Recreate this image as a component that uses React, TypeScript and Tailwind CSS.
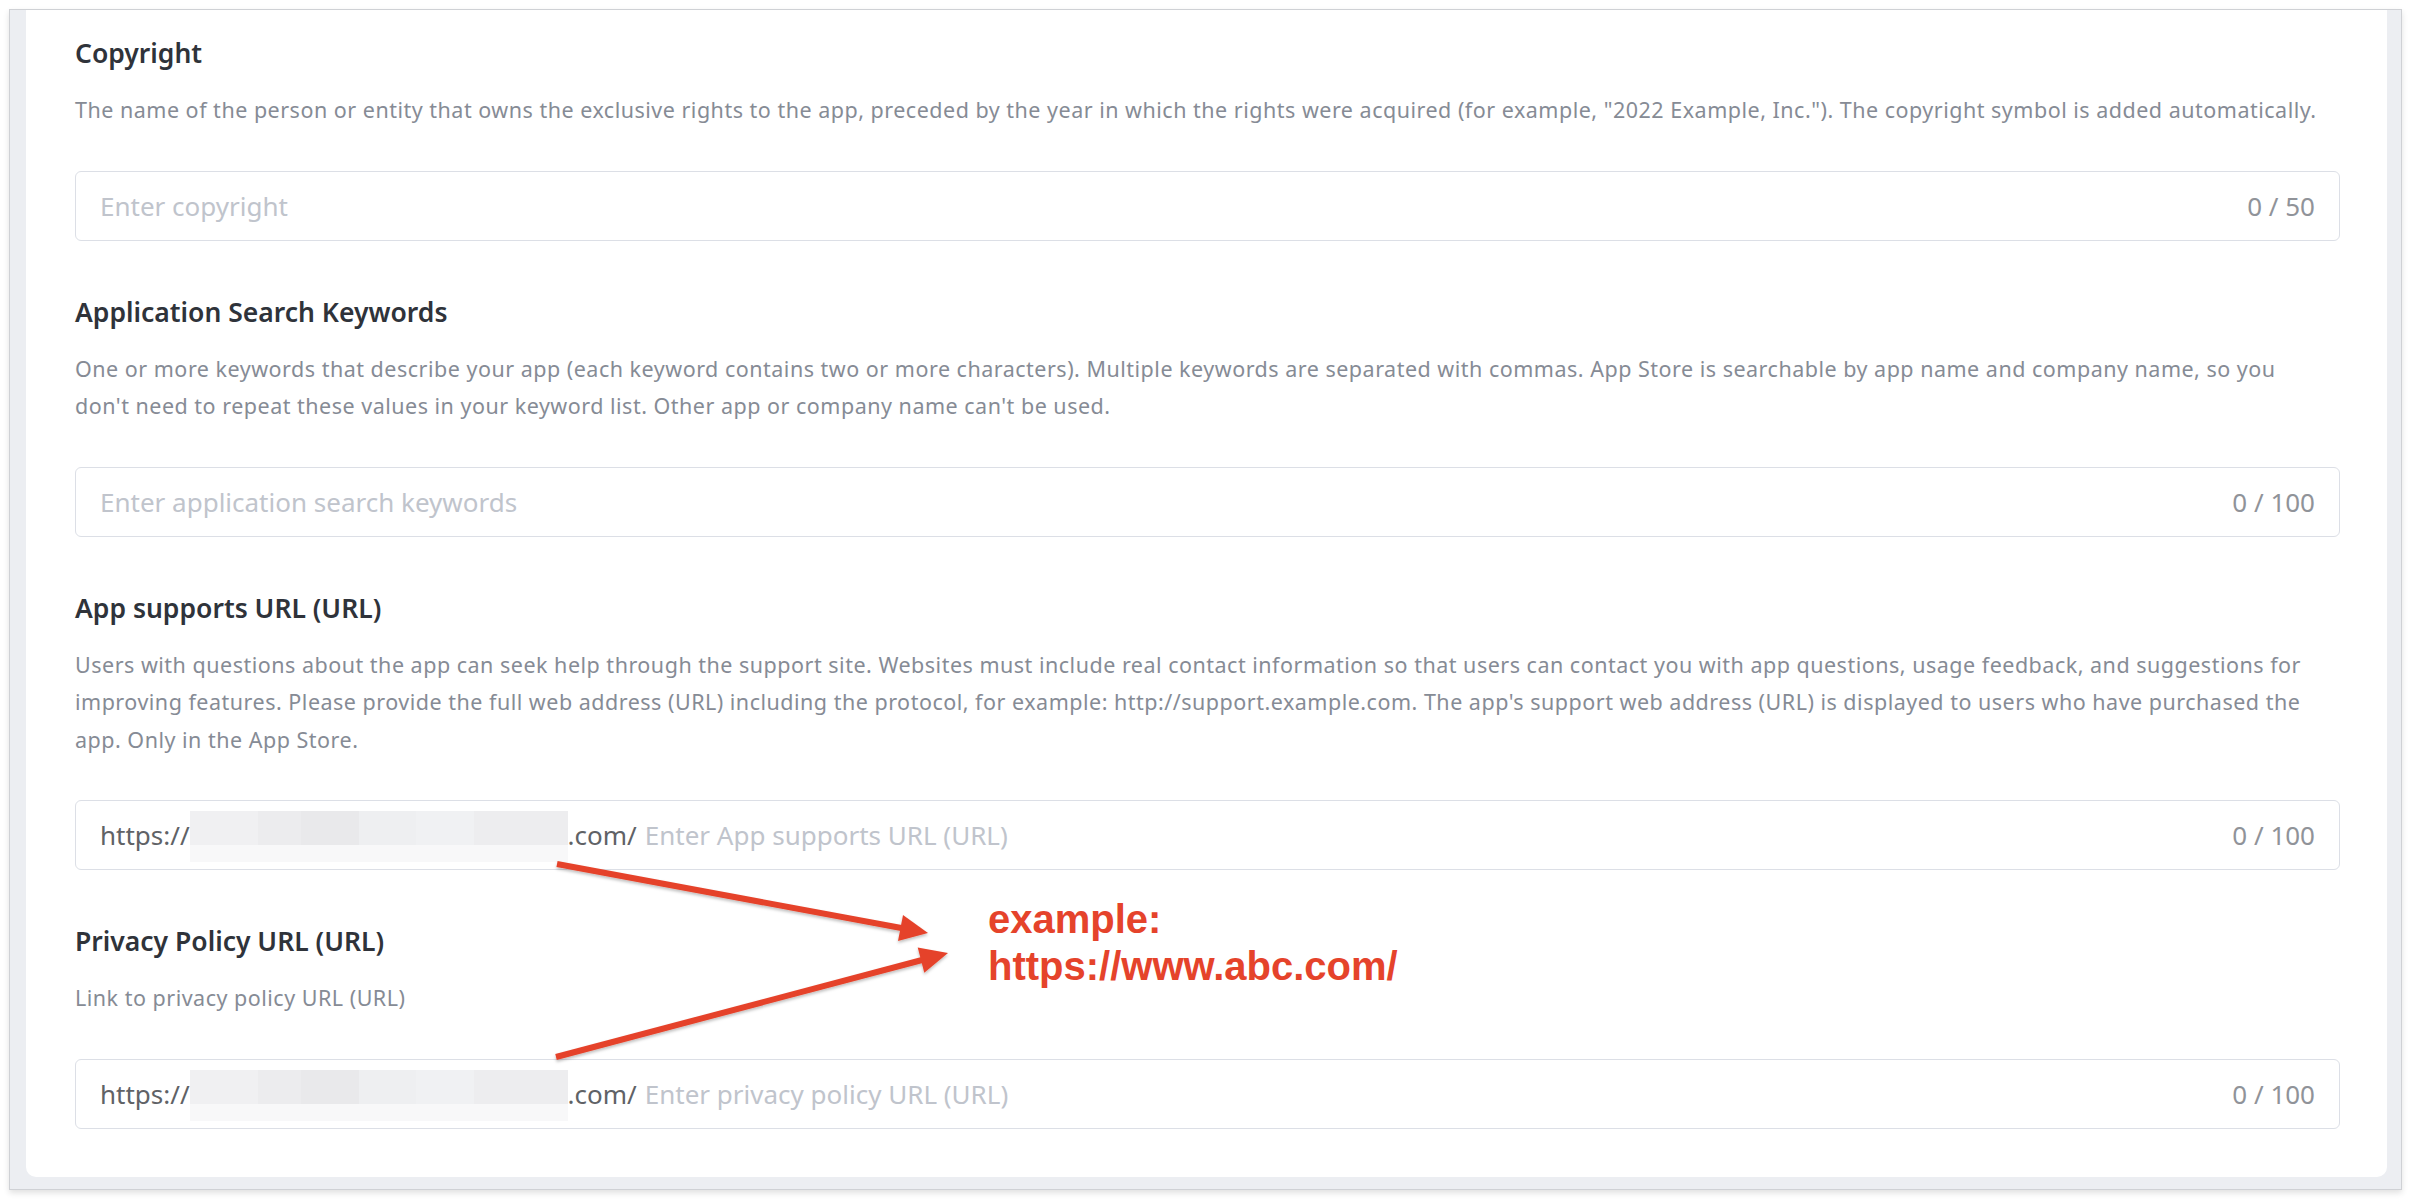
import React from 'react'

type Field = {
  label: string
  desc: string[]
  placeholder: string
  max: number
  prefix?: boolean
}

// each description line is set explicitly so it breaks where the reference does
const FIELDS: Field[] = [
  {
    label: 'Copyright',
    desc: [
      'The name of the person or entity that owns the exclusive rights to the app, preceded by the year in which the rights were acquired (for example, "2022 Example, Inc."). The copyright symbol is added automatically.'
    ],
    placeholder: 'Enter copyright',
    max: 50
  },
  {
    label: 'Application Search Keywords',
    desc: [
      'One or more keywords that describe your app (each keyword contains two or more characters). Multiple keywords are separated with commas. App Store is searchable by app name and company name, so you',
      "don't need to repeat these values in your keyword list. Other app or company name can't be used."
    ],
    placeholder: 'Enter application search keywords',
    max: 100
  },
  {
    label: 'App supports URL (URL)',
    desc: [
      'Users with questions about the app can seek help through the support site. Websites must include real contact information so that users can contact you with app questions, usage feedback, and suggestions for',
      "improving features. Please provide the full web address (URL) including the protocol, for example: http://support.example.com. The app's support web address (URL) is displayed to users who have purchased the",
      'app. Only in the App Store.'
    ],
    placeholder: 'Enter App supports URL (URL)',
    max: 100,
    prefix: true
  },
  {
    label: 'Privacy Policy URL (URL)',
    desc: ['Link to privacy policy URL (URL)'],
    placeholder: 'Enter privacy policy URL (URL)',
    max: 100,
    prefix: true
  }
]

// blurred-out domain in the screenshot
function Redacted(): JSX.Element {
  const cols = [
    { w: 68, c: 'bg-[#f0f0f2]' },
    { w: 43, c: 'bg-[#ececee]' },
    { w: 58, c: 'bg-[#e9e9eb]' },
    { w: 57, c: 'bg-[#eeeff1]' },
    { w: 58, c: 'bg-[#f0f1f3]' },
    { w: 94, c: 'bg-[#ededef]' }
  ]
  return (
    <span className="flex flex-col self-start mt-[10px]">
      <span className="flex h-[34px]">
        {cols.map((col, i) => (
          <span key={i} className={col.c} style={{ width: col.w }} />
        ))}
      </span>
      <span className="h-[17px] w-[378px] bg-[#f8f8f9]" />
    </span>
  )
}

function Input({ field }: { field: Field }): JSX.Element {
  return (
    <div className="mt-[42px] h-[70px] border border-[#dcdfe6] rounded-[6px] flex items-center px-[24px] text-[26px] leading-none">
      {field.prefix && (
        <>
          <span className="text-[#606266]">https://</span>
          <Redacted />
          <span className="text-[#606266] mr-[8px]">.com/</span>
        </>
      )}
      <span className="text-[#c0c4cc]">{field.placeholder}</span>
      <span className="ml-auto text-[#909399]">0 / {field.max}</span>
    </div>
  )
}

function Arrows(): JSX.Element {
  return (
    <svg
      className="absolute left-0 top-0 pointer-events-none"
      width={2412}
      height={1200}
      viewBox="0 0 2412 1200"
    >
      <defs>
        <filter id="sh" x="-10%" y="-10%" width="120%" height="140%">
          <feDropShadow dx="0" dy="2" stdDeviation="1.5" floodColor="#000" floodOpacity="0.25" />
        </filter>
      </defs>
      <g filter="url(#sh)" fill="#e5432b" stroke="#e5432b">
        <line x1={557} y1={864} x2={904} y2={928.5} strokeWidth={6} strokeLinecap="butt" />
        <polygon points="928,933 898,941 903,915" stroke="none" />
        <line x1={556} y1={1057} x2={924} y2={959.5} strokeWidth={6} strokeLinecap="butt" />
        <polygon points="948,953 924.3,972.8 917.7,947.6" stroke="none" />
      </g>
    </svg>
  )
}

export default function App(): JSX.Element {
  return (
    <div className="relative w-[2412px] h-[1200px] bg-white overflow-hidden pt-[9px] pl-[9px] font-['Noto_Sans',sans-serif]">
      {/* screenshot frame */}
      <div className="w-[2393px] h-[1181px] border border-[#cfd1d5] bg-[#eceef2] pl-[16px] pr-[14px] shadow-[0_3px_6px_rgba(0,0,0,0.12)]">
        <div className="bg-white rounded-b-[10px] h-[1167px] pt-[25px] pl-[49px] pr-[47px]">
          {FIELDS.map((f, i) => (
            <div key={f.label} className={i > 0 ? 'mt-[53px]' : ''}>
              <div className="text-[26.5px] leading-[36px] font-semibold text-[#2f333a]">{f.label}</div>
              <div className="mt-[20px] text-[21.5px] leading-[37.5px] tracking-[0.5px] text-[#868b95] whitespace-nowrap">
                {f.desc.map((line, j) => (
                  <div key={j}>{line}</div>
                ))}
              </div>
              <Input field={f} />
            </div>
          ))}
        </div>
      </div>

      <Arrows />

      {/* red annotation */}
      <div className="absolute left-[988px] top-[896px] text-[40px] leading-[47px] font-bold text-[#e5432b] font-['Liberation_Sans',Arial,sans-serif]">
        <div>example:</div>
        <div>https://www.abc.com/</div>
      </div>
    </div>
  )
}
